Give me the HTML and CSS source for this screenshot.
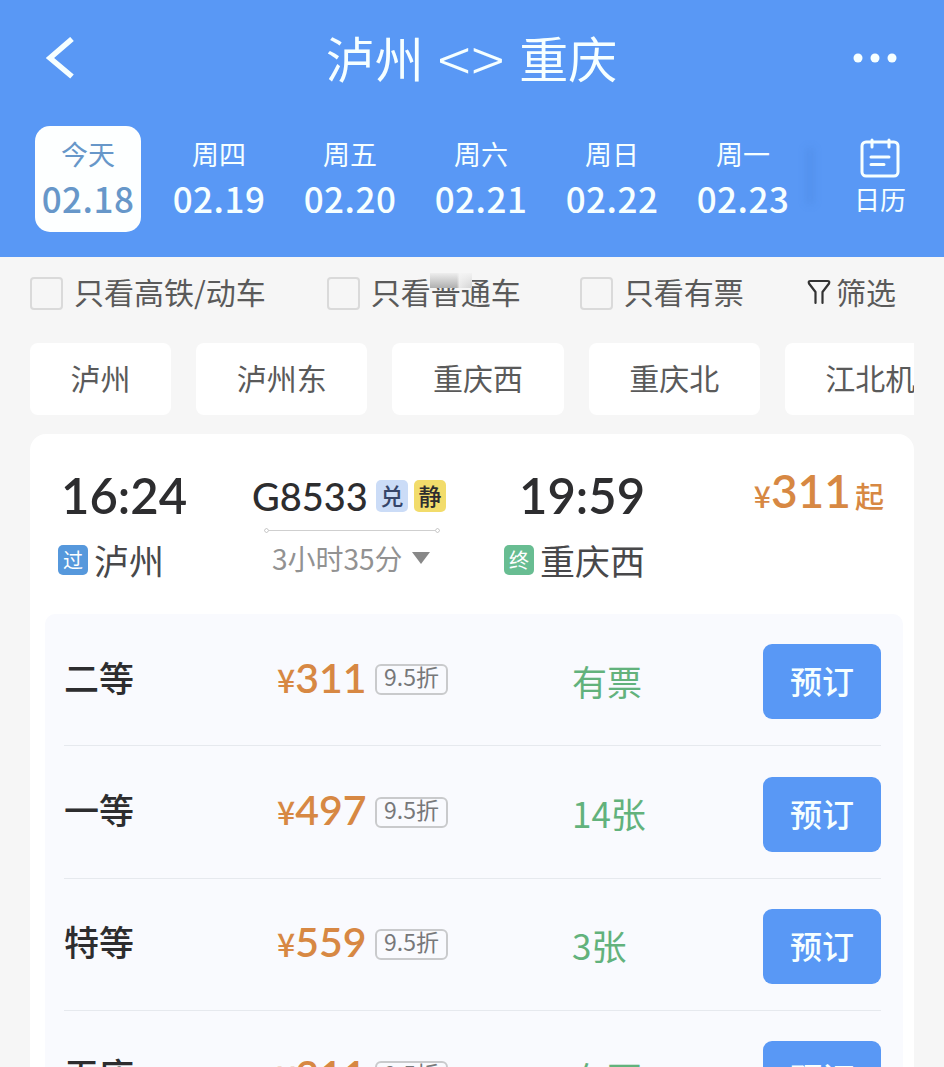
FILE: index.html
```
<!DOCTYPE html>
<html lang="zh-CN">
<head>
    <meta charset="UTF-8">
    <title>泸州 - 重庆</title>
    <link rel="stylesheet" href="styles.css">
</head>
<body>
    <header class="header">
        <div class="nav">
            <svg class="back" width="30" height="42" viewBox="0 0 30 42">
                <path d="M27 2 L5 21 L27 39.500" fill="none" stroke="currentColor" stroke-width="5.500"/>
            </svg>
            <h1 class="title"><span>泸州</span><span class="arrows">&lt;&gt;</span><span>重庆</span></h1>
            <svg class="more" width="44" height="10" viewBox="0 0 44 10" fill="currentColor">
                <circle cx="5" cy="5" r="4.500"/>
                <circle cx="22" cy="5" r="4.500"/>
                <circle cx="39" cy="5" r="4.500"/>
            </svg>
        </div>
        <div class="dates">
            <div class="date active"><span class="day">今天</span><span class="num">02.18</span></div>
            <div class="date"><span class="day">周四</span><span class="num">02.19</span></div>
            <div class="date"><span class="day">周五</span><span class="num">02.20</span></div>
            <div class="date"><span class="day">周六</span><span class="num">02.21</span></div>
            <div class="date"><span class="day">周日</span><span class="num">02.22</span></div>
            <div class="date"><span class="day">周一</span><span class="num">02.23</span></div>
            <div class="divider"></div>
            <div class="calendar">
                <svg width="40" height="40" viewBox="0 0 40 40" fill="none" stroke="currentColor" stroke-width="3" stroke-linecap="round">
                    <rect x="2" y="4" width="36" height="34" rx="4"/>
                    <path d="M12 2v7M29 2v7M11 19h18M11 26.500h13"/>
                </svg>
                <span>日历</span>
            </div>
        </div>
    </header>

    <div class="filters">
        <div class="check"><span class="box"></span><span>只看高铁/动车</span></div>
        <div class="check"><span class="box"></span><span>只看普通车</span><span class="smudge"></span></div>
        <div class="check"><span class="box"></span><span>只看有票</span></div>
        <div class="filter">
            <svg width="24" height="26" viewBox="0 0 24 26" fill="none" stroke="currentColor" stroke-width="2.200" stroke-linejoin="round" stroke-linecap="round">
                <path d="M8.500 24V13L2 4.500Q1 2 3.500 2H20.500Q23 2 22 4.500L15.500 13V24"/>
            </svg>
            <span>筛选</span>
        </div>
    </div>

    <div class="stations">
        <div class="station">泸州</div>
        <div class="station">泸州东</div>
        <div class="station">重庆西</div>
        <div class="station">重庆北</div>
        <div class="station">江北机场</div>
    </div>

    <div class="card">
        <div class="trip">
            <div class="stop">
                <div class="time">16:24</div>
                <div class="place"><span class="tag pass">过</span>泸州</div>
            </div>
            <div class="train">
                <div class="train-no">G8533<span class="mark blue">兑</span><span class="mark yellow">静</span></div>
                <div class="line"></div>
                <div class="duration">3小时35分<span class="caret"></span></div>
            </div>
            <div class="stop arrive">
                <div class="time">19:59</div>
                <div class="place"><span class="tag end">终</span>重庆西</div>
            </div>
            <div class="from"><span class="yen">¥</span><span class="amount">311</span><span class="qi">起</span></div>
        </div>

        <div class="seats">
            <div class="seat">
                <div class="seat-name">二等</div>
                <div class="price"><span class="yen">¥</span><span class="amount">311</span></div>
                <div class="off">9.5折</div>
                <div class="left">有票</div>
                <button class="book">预订</button>
            </div>
            <div class="seat">
                <div class="seat-name">一等</div>
                <div class="price"><span class="yen">¥</span><span class="amount">497</span></div>
                <div class="off">9.5折</div>
                <div class="left">14张</div>
                <button class="book">预订</button>
            </div>
            <div class="seat">
                <div class="seat-name">特等</div>
                <div class="price"><span class="yen">¥</span><span class="amount">559</span></div>
                <div class="off">9.5折</div>
                <div class="left">3张</div>
                <button class="book">预订</button>
            </div>
            <div class="seat">
                <div class="seat-name">无座</div>
                <div class="price"><span class="yen">¥</span><span class="amount">311</span></div>
                <div class="off">9.5折</div>
                <div class="left">有票</div>
                <button class="book">预订</button>
            </div>
        </div>
    </div>
</body>
</html>
```
FILE: styles.css
```
* {
    box-sizing: border-box;
}

body {
    margin: 0;
    height: 1067px;
    overflow: hidden;
    background: #f6f6f6;
    color: #2d2d2f;
    font-family: "Noto Sans CJK SC", sans-serif;
}

/* Header */
.header {
    height: 257px;
    background: #5998f5;
    color: #f6ffff;
}

.nav {
    height: 126px;
    padding: 0 47px 10px 45px;
    display: flex;
    align-items: center;
    justify-content: space-between;
}

.title {
    display: flex;
    align-items: center;
    margin: 0 0 2px 15px;
    font-size: 49px;
    font-weight: 400;
    line-height: 70px;
}

.arrows {
    margin: 0 14px;
    font-size: 61px;
    font-weight: 300;
    letter-spacing: 1px;
}

.dates {
    display: flex;
    padding-left: 35px;
}

.date {
    width: 106px;
    height: 106px;
    margin-right: 25px;
    padding-top: 7px;
    border-radius: 15px;
    display: flex;
    flex-direction: column;
    align-items: center;
}

.date.active {
    background: #fdffff;
    color: #6797c9;
}

.day {
    font-size: 27px;
    line-height: 42px;
}

.num {
    font-size: 35px;
    font-weight: 500;
    line-height: 46px;
    letter-spacing: 0.5px;
}

.divider {
    width: 6px;
    height: 56px;
    margin: 22px 0 0 -14px;
    background: rgba(45, 105, 195, 0.2);
    filter: blur(4px);
}

.calendar {
    margin-left: 41px;
    padding-top: 12px;
    display: flex;
    flex-direction: column;
    align-items: center;
    font-size: 26px;
    line-height: 42px;
}

/* Filters */
.filters {
    height: 86px;
    padding: 0 48px 14px 30px;
    display: flex;
    align-items: center;
    font-size: 30px;
    line-height: 40px;
    color: #5a5a5a;
}

.check {
    position: relative;
    display: flex;
    align-items: center;
    margin-right: 59px;
}

.check:first-child {
    margin-right: 61px;
}

.check span:nth-child(2),
.filter span {
    margin-bottom: 5px;
}

.box {
    width: 33px;
    height: 33px;
    margin-right: 11px;
    border: 2px solid #dadada;
    border-radius: 4px;
}

/* Soft grey patch over the top of the label */
.smudge {
    position: absolute;
    left: 103px;
    top: 2px;
    width: 42px;
    height: 15px;
    background: linear-gradient(90deg, rgba(246, 246, 246, 0) 64%, rgba(246, 246, 246, 0.8) 70%, rgba(246, 246, 246, 0.5)), linear-gradient(#eeeeee, #b0b0b0);
}

.filter {
    display: flex;
    align-items: center;
    gap: 5px;
    margin-left: auto;
}

.filter svg {
    margin-bottom: 3px;
    color: #333;
}

/* Station chips */
.stations {
    margin: 0 30px 0 30px;
    display: flex;
    gap: 25px;
    overflow: hidden;
}

.station {
    flex: none;
    height: 72px;
    padding: 0 40.6px;
    border-radius: 8px;
    background: #fff;
    color: #5a5a5a;
    font-size: 30px;
    line-height: 69px;
}

/* Train card */
.card {
    margin: 19px 30px 0;
    padding: 0 11px 0 15px;
    border-radius: 16px;
    background: #fff;
}

.trip {
    height: 180px;
    padding: 31px 18px 0 13px;
    display: grid;
    grid-template-columns: 194px 252px 240px 1fr;
}

.time {
    padding-left: 3px;
    font-family: Lato, sans-serif;
    font-size: 49px;
    font-weight: 600;
    line-height: 60px;
}

.arrive .time {
    padding-left: 15px;
}

.place {
    margin-top: 12px;
    display: flex;
    align-items: center;
    color: #48484a;
    font-size: 35px;
    line-height: 46px;
}

.tag {
    width: 30px;
    height: 30px;
    margin-right: 6px;
    border-radius: 5px;
    color: #fff;
    font-size: 20px;
    line-height: 29px;
    text-align: center;
}

.pass {
    background: #5698dc;
}

.end {
    background: #68bd92;
}

.train-no {
    display: flex;
    align-items: center;
    font-family: Lato, sans-serif;
    font-size: 38px;
    font-weight: 500;
    line-height: 62px;
}

.mark {
    width: 32px;
    height: 32px;
    margin-left: 6px;
    border-radius: 5px;
    font-family: "Noto Sans CJK SC", sans-serif;
    font-size: 23px;
    line-height: 30px;
    text-align: center;
}

.mark.blue {
    margin-left: 8px;
    background: #cbdcf7;
    color: #35456a;
}

.mark.yellow {
    background: #f2dc6b;
}

.line {
    width: 176px;
    height: 5px;
    margin: 1px 0 0 12px;
    background:
        radial-gradient(circle, #fff 1px, #cfcfcf 1.5px, #cfcfcf 2px, transparent 2.5px) left / 5px 5px no-repeat,
        radial-gradient(circle, #fff 1px, #cfcfcf 1.5px, #cfcfcf 2px, transparent 2.5px) right / 5px 5px no-repeat,
        linear-gradient(#cfcfcf, #cfcfcf) center / 168px 1px no-repeat;
}

.duration {
    display: flex;
    align-items: center;
    padding-left: 20px;
    color: #929292;
    font-size: 28px;
    line-height: 50px;
}

.caret {
    margin-left: 9px;
    border: 9px solid transparent;
    border-top: 12px solid #888;
    border-bottom: 0;
}

.from {
    display: flex;
    align-items: baseline;
    justify-content: flex-end;
    height: 60px;
    margin-top: -2px;
    padding-right: 1px;
    color: #d78843;
}

.yen {
    font-size: 30px;
    font-weight: 500;
}

.amount {
    font-family: Lato, sans-serif;
    font-size: 46px;
    font-weight: 600;
}

.qi {
    margin-left: 4px;
    font-size: 29px;
    font-weight: 500;
}

/* Seat rows */
.seats {
    padding: 0 22px 0 19px;
    border-radius: 10px 10px 0 0;
    background: #f9fafe;
}

.seat {
    height: 132.4px;
    display: grid;
    grid-template-columns: 212px 99px 197px 1fr 118px;
    align-items: center;
    border-bottom: 1px solid #e6e9ee;
}

.seat-name {
    font-size: 35px;
    font-weight: 500;
    line-height: 46px;
    margin-bottom: 6px;
}

.price {
    display: flex;
    align-items: baseline;
    margin-bottom: 3px;
    padding-left: 1px;
    color: #d78843;
    line-height: 46px;
}

.price .yen {
    font-size: 32px;
}

.price .amount {
    font-size: 41px;
}

.off {
    width: 73px;
    height: 31px;
    border: 2px solid #c9cacc;
    border-radius: 6px;
    color: #77787a;
    font-size: 23px;
    line-height: 21px;
    text-align: center;
}

.left {
    color: #62b27c;
    font-size: 35px;
    line-height: 46px;
    margin-top: 2px;
}

.book {
    height: 75px;
    margin-top: 4px;
    padding: 0 0 3px;
    border: 0;
    border-radius: 9px;
    background: #5998f5;
    color: #f6ffff;
    font-family: inherit;
    font-size: 32px;
    font-weight: 500;
}
```
